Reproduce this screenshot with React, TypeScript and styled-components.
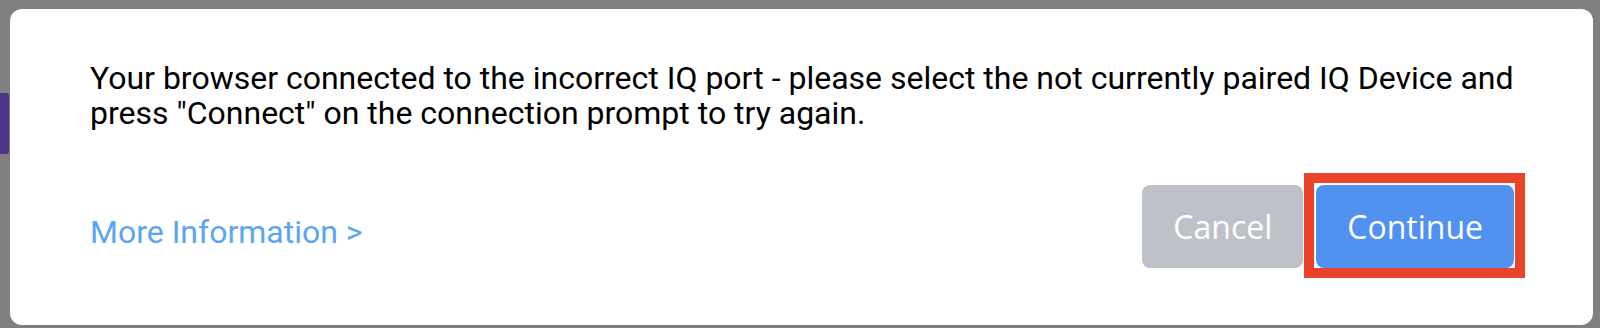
import React from "react";
import styled, { createGlobalStyle } from "styled-components";

const GlobalStyle = createGlobalStyle`
  html, body {
    margin: 0;
    padding: 0;
    background: #808080;
  }
  body {
    font-family: Roboto, "Liberation Sans", sans-serif;
    overflow: hidden;
  }
`;

const Backdrop = styled.div`
  position: relative;
  height: 328px;
  padding: 9px 7px 3px 10px;
  box-sizing: border-box;
  display: flex;
`;

const SideTab = styled.div`
  position: absolute;
  left: 0;
  top: 93px;
  width: 9px;
  height: 61px;
  background: #4b338a;
  border-radius: 0 3px 3px 0;
`;

const Dialog = styled.div`
  flex: 1;
  background: #fff;
  border-radius: 12px;
  padding: 52px 79px 57px 80px;
  display: flex;
  flex-direction: column;
  justify-content: space-between;
`;

const Message = styled.p`
  margin: 0;
  font-size: 32px;
  line-height: 35px;
  color: #000;
`;

const Footer = styled.div`
  display: flex;
  align-items: center;
  justify-content: space-between;
`;

const InfoLink = styled.a`
  font-size: 32px;
  line-height: 36px;
  color: #5aa6ef;
  text-decoration: none;
  cursor: pointer;
  margin-top: 10px;
`;

const Actions = styled.div`
  display: flex;
  gap: 13px;
`;

const Button = styled.button<{ $primary?: boolean; $highlight?: boolean }>`
  position: relative;
  height: 83px;
  border: none;
  border-radius: 8px;
  padding: 0 31px;
  font-family: "Open Sans", "Liberation Sans", sans-serif;
  font-size: 32px;
  color: #fff;
  background: ${(p) => (p.$primary ? "#5191ef" : "#bec2c8")};
  cursor: pointer;

  ${(p) =>
    p.$highlight &&
    `
    &::after {
      content: "";
      position: absolute;
      inset: -12px -11px -10px -12px;
      border: 10px solid #e9432a;
      pointer-events: none;
    }
  `}
`;

export default function App() {
  return (
    <>
      <GlobalStyle />
      <Backdrop>
        <SideTab />
        <Dialog>
          <Message>
            Your browser connected to the incorrect IQ port - please select the
            not currently paired IQ Device and press "Connect" on the connection
            prompt to try again.
          </Message>
          <Footer>
            <InfoLink>More Information &gt;</InfoLink>
            <Actions>
              <Button>Cancel</Button>
              <Button $primary $highlight>
                Continue
              </Button>
            </Actions>
          </Footer>
        </Dialog>
      </Backdrop>
    </>
  );
}
